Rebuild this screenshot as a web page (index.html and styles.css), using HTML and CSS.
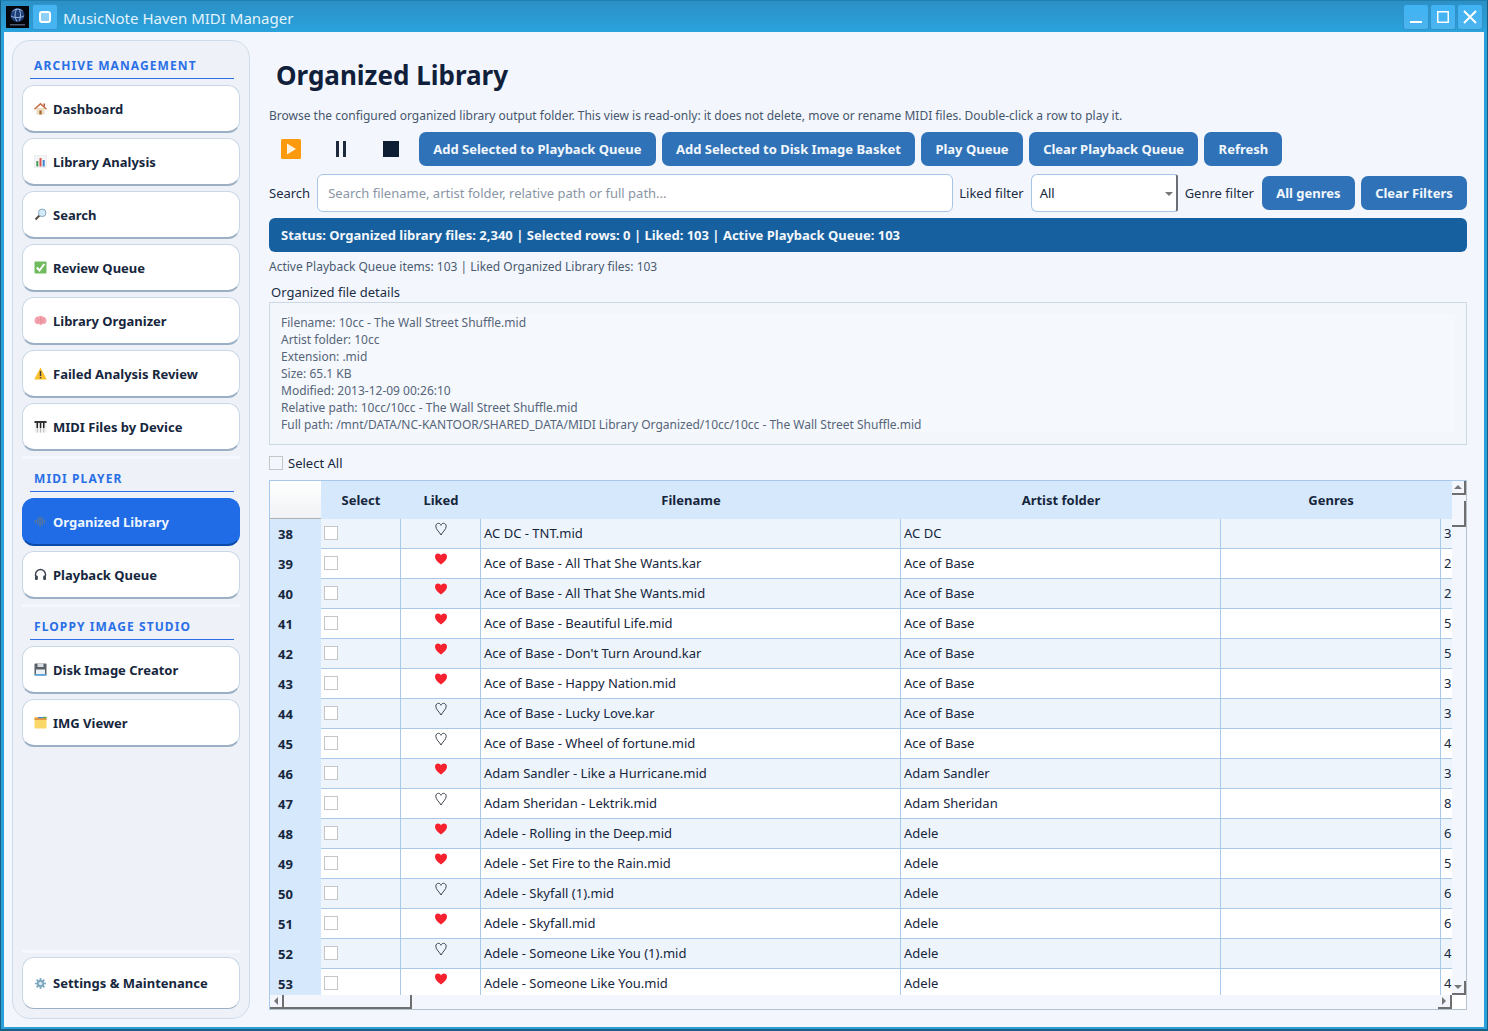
FILE: index.html
```html
<!doctype html>
<html lang="en">
<head>
    <meta charset="UTF-8">
    <title>MusicNote Haven MIDI Manager</title>
    <link rel="stylesheet" href="styles.css">
</head>
<body>
<svg class="defs" width="0" height="0">
    <symbol id="heart" viewBox="0 0 14 14"><path d="M7 12.6C5.6 11.3 1 8.3 1 4.7 1 2.8 2.4 1.6 4 1.6c1.3 0 2.4.7 3 1.9.6-1.2 1.7-1.9 3-1.900 1.600 0 3 1.200 3 3.100 0 3.600-4.600 6.600-6 7.900z"/></symbol>
    <symbol id="heart-line" viewBox="0 0 14 14"><path d="M7 13C5.500 10 1.800 7.500 1.800 4.300 1.800 2.500 3 1.300 4.500 1.300 5.600 1.300 6.500 2 7 3.300 7.500 2 8.400 1.300 9.500 1.300 11 1.300 12.200 2.500 12.200 4.300 12.200 7.500 8.500 10 7 13z"/></symbol>
</svg>
<div id="window">
    <header id="titlebar">
        <svg class="logo" width="23" height="22" viewBox="0 0 23 22">
            <rect width="23" height="22" fill="#05060c"/>
            <circle cx="11.500" cy="9" r="7" fill="#1c3f78"/>
            <path d="M6.500 5.500c3-3 7-3 10-.5M5 10c3 2 9 2 13 0M11 2.500c-2.500 4-2.500 9 0 13M13 3c2 4 2 8 0 12" fill="none" stroke="#a9c6ee" stroke-width=".9"/>
            <rect x="4" y="18" width="15" height="1.500" fill="#4c5a72"/>
        </svg>
        <div class="app-btn"><span class="app-square"></span></div>
        <span class="app-title">MusicNote Haven MIDI Manager</span>
        <div class="win-btns">
            <div class="win-btn"><svg width="14" height="14" viewBox="0 0 14 14"><rect x="1" y="11" width="12" height="2" fill="#fff"/></svg></div>
            <div class="win-btn"><svg width="14" height="14" viewBox="0 0 14 14"><rect x="1.750" y="1.750" width="10.500" height="10.500" fill="none" stroke="#fff" stroke-width="1.500"/></svg></div>
            <div class="win-btn"><svg width="14" height="14" viewBox="0 0 14 14"><path d="M1 1l12 12M13 1L1 13" stroke="#fff" stroke-width="2"/></svg></div>
        </div>
    </header>
    <div id="content">
        <aside id="sidebar">
            <div class="nav-label">ARCHIVE MANAGEMENT</div>
            <a class="nav-item"><svg class="nav-icon" viewBox="0 0 13 13"><rect x="2.500" y="6" width="8" height="6.500" fill="#ecdcc0"/><path d="M6.500 .8L0 6.800l1 .9 5.500-4.900 5.500 4.900 1-.9z" fill="#c8683f"/><rect x="5.300" y="8.500" width="2.400" height="4" fill="#a86a3c"/><rect x="9.500" y="1.500" width="1.500" height="3" fill="#b5583a"/></svg>Dashboard</a>
            <a class="nav-item"><svg class="nav-icon" viewBox="0 0 13 13"><rect x=".5" y=".5" width="12" height="12" fill="#f3f5f7" stroke="#dfe4ea" stroke-width=".5"/><rect x="2.300" y="6" width="2" height="5.500" fill="#4a9a5a"/><rect x="5.500" y="3" width="2" height="8.500" fill="#d9534f"/><rect x="8.700" y="5" width="2" height="6.500" fill="#3f86d9"/></svg>Library Analysis</a>
            <a class="nav-item"><svg class="nav-icon" viewBox="0 0 13 13"><path d="M5.500 7.500L1.500 11.500" stroke="#5b5048" stroke-width="2.200"/><circle cx="8.200" cy="4.800" r="3.800" fill="#d3e9f8" stroke="#8aa7bd" stroke-width="1"/></svg>Search</a>
            <a class="nav-item"><svg class="nav-icon" viewBox="0 0 13 13"><rect x=".5" y=".5" width="12" height="12" rx="1" fill="#6fbb5e"/><path d="M2.800 6.500l2.700 3L10.300 3" fill="none" stroke="#fff" stroke-width="2"/></svg>Review Queue</a>
            <a class="nav-item"><svg class="nav-icon" viewBox="0 0 13 13"><path d="M.5 7c0-3 2-4.800 4-4.300 1-1.200 3.500-1.200 4.500 0 2.200 0 3.800 1.800 3.500 4.300 0 2.300-2 3.300-3.500 2.800-.8 1.400-3 1.400-3.800.2C3 10.500.5 9.500.5 7z" fill="#f3a3ad"/><path d="M3.500 4.500c1 1 1 3 0 4M6.500 3.500c0 2 .5 4 .5 6M9.500 4.500c-1 1.500-1 3 0 4" fill="none" stroke="#de7f8e" stroke-width=".8"/></svg>Library Organizer</a>
            <a class="nav-item"><svg class="nav-icon" viewBox="0 0 13 13"><path d="M6.500 .5L12.800 12.500H.2z" fill="#f9bf2c"/><rect x="5.800" y="4" width="1.400" height="5" fill="#3a3a3a"/><rect x="5.800" y="10" width="1.400" height="1.400" fill="#3a3a3a"/></svg>Failed Analysis Review</a>
            <a class="nav-item"><svg class="nav-icon" viewBox="0 0 13 13"><rect x=".5" y="1" width="12" height="11.500" fill="#f2f2f2"/><rect x=".5" y="1" width="12" height="2" fill="#333"/><path d="M2.500 3h1.500v5H2.500zM5.800 3h1.500v5H5.800zM9 3h1.500v5H9z" fill="#222"/><path d="M3.300 8v4.500M6.500 8v4.500M9.800 8v4.500" stroke="#999" stroke-width=".6"/></svg>MIDI Files by Device</a>
            <div class="nav-sep"></div>
            <div class="nav-label">MIDI PLAYER</div>
            <a class="nav-item active"><svg class="nav-icon" viewBox="0 0 13 13"><path d="M1.500 5v3M3.800 3.500v6M6 1v11M8.200 2.500v8M10.500 4.500v4" stroke="#56779f" stroke-width="1.500"/></svg>Organized Library</a>
            <a class="nav-item"><svg class="nav-icon" viewBox="0 0 13 13"><path d="M1.500 8V6.500a5 5 0 0 1 10 0V8" fill="none" stroke="#3c4450" stroke-width="1.400"/><rect x="1" y="7.500" width="2.800" height="4.500" rx="1" fill="#3c4450"/><rect x="9.200" y="7.500" width="2.800" height="4.500" rx="1" fill="#3c4450"/></svg>Playback Queue</a>
            <div class="nav-sep"></div>
            <div class="nav-label">FLOPPY IMAGE STUDIO</div>
            <a class="nav-item"><svg class="nav-icon" viewBox="0 0 13 13"><rect x=".5" y=".5" width="12" height="12" rx="1" fill="#5a6068"/><rect x="3.500" y=".5" width="6" height="3.500" fill="#d8dde3"/><rect x="2" y="6.500" width="9" height="5" fill="#eef1f4"/><rect x=".5" y="11" width="12" height="1.500" fill="#55a8e6"/></svg>Disk Image Creator</a>
            <a class="nav-item"><svg class="nav-icon" viewBox="0 0 13 13"><rect x=".5" y="1.500" width="12" height="11" rx="1" fill="#f9d768"/><rect x=".5" y="1.500" width="12" height="2.500" fill="#e8973a"/><rect x="8.500" y=".8" width="4" height="1.500" fill="#5aa85a"/><rect x="4" y="1" width="4.500" height="1.200" fill="#3f86d9"/></svg>IMG Viewer</a>
            <div class="nav-spacer"></div>
            <div class="nav-sep bottom"></div>
            <a class="nav-item settings"><svg class="nav-icon" viewBox="0 0 13 13"><path d="M6.500 1v11M1 6.500h11M2.600 2.600l7.800 7.800M10.400 2.600l-7.800 7.800" stroke="#7fa9c0" stroke-width="1.700"/><circle cx="6.500" cy="6.500" r="3.800" fill="#7fa9c0"/><circle cx="6.500" cy="6.500" r="1.700" fill="#dcebf3"/></svg>Settings &amp; Maintenance</a>
        </aside>
        <main id="main">
            <h1 class="page-title">Organized Library</h1>
            <p class="hint">Browse the configured organized library output folder. This view is read-only: it does not delete, move or rename MIDI files. Double-click a row to play it.</p>
            <div class="toolbar">
                <div class="transport">
                    <svg width="20" height="20" viewBox="0 0 20 20"><rect width="20" height="20" rx="1.500" fill="#fb9a0e"/><path d="M6 4.500v11l9-5.500z" fill="#fdf3e2"/></svg>
                </div>
                <div class="transport">
                    <svg width="12" height="16" viewBox="0 0 12 16"><rect x="1" width="3" height="16" fill="#1d2a3c"/><rect x="8" width="3" height="16" fill="#1d2a3c"/></svg>
                </div>
                <div class="transport">
                    <svg width="16" height="16" viewBox="0 0 16 16"><rect width="16" height="16" fill="#0f1f33"/></svg>
                </div>
                <button class="btn">Add Selected to Playback Queue</button>
                <button class="btn">Add Selected to Disk Image Basket</button>
                <button class="btn">Play Queue</button>
                <button class="btn">Clear Playback Queue</button>
                <button class="btn">Refresh</button>
            </div>
            <div class="filters">
                <label>Search</label>
                <div class="search">Search filename, artist folder, relative path or full path...</div>
                <label>Liked filter</label>
                <div class="combo">All<span class="combo-arrow"></span></div>
                <label>Genre filter</label>
                <button class="btn small">All genres</button>
                <button class="btn small">Clear Filters</button>
            </div>
            <div class="status">Status: Organized library files: 2,340 | Selected rows: 0 | Liked: 103 | Active Playback Queue: 103</div>
            <div class="counts">Active Playback Queue items: 103 | Liked Organized Library files: 103</div>
            <div class="details-title">Organized file details</div>
            <div class="details">
                <div class="details-inner">
                    Filename: 10cc - The Wall Street Shuffle.mid<br>
                    Artist folder: 10cc<br>
                    Extension: .mid<br>
                    Size: 65.1 KB<br>
                    Modified: 2013-12-09 00:26:10<br>
                    Relative path: 10cc/10cc - The Wall Street Shuffle.mid<br>
                    Full path: /mnt/DATA/NC-KANTOOR/SHARED_DATA/MIDI Library Organized/10cc/10cc - The Wall Street Shuffle.mid
                </div>
            </div>
            <div class="select-all"><span class="check big"></span>Select All</div>
            <div class="grid-wrap">
                <div class="grid-view">
                    <table class="grid">
                        <colgroup>
                            <col class="c-num"><col class="c-sel"><col class="c-like"><col class="c-file"><col class="c-artist"><col class="c-genre"><col class="c-more">
                        </colgroup>
                        <thead>
                            <tr><th class="corner"></th><th>Select</th><th>Liked</th><th>Filename</th><th>Artist folder</th><th>Genres</th><th></th></tr>
                        </thead>
                        <tbody>
                            <tr><th>38</th><td><span class="check"></span></td><td class="like"><svg class="heart off"><use href="#heart-line"/></svg></td><td>AC DC - TNT.mid</td><td>AC DC</td><td></td><td>3</td></tr>
                            <tr><th>39</th><td><span class="check"></span></td><td class="like"><svg class="heart on"><use href="#heart"/></svg></td><td>Ace of Base - All That She Wants.kar</td><td>Ace of Base</td><td></td><td>2</td></tr>
                            <tr><th>40</th><td><span class="check"></span></td><td class="like"><svg class="heart on"><use href="#heart"/></svg></td><td>Ace of Base - All That She Wants.mid</td><td>Ace of Base</td><td></td><td>2</td></tr>
                            <tr><th>41</th><td><span class="check"></span></td><td class="like"><svg class="heart on"><use href="#heart"/></svg></td><td>Ace of Base - Beautiful Life.mid</td><td>Ace of Base</td><td></td><td>5</td></tr>
                            <tr><th>42</th><td><span class="check"></span></td><td class="like"><svg class="heart on"><use href="#heart"/></svg></td><td>Ace of Base - Don't Turn Around.kar</td><td>Ace of Base</td><td></td><td>5</td></tr>
                            <tr><th>43</th><td><span class="check"></span></td><td class="like"><svg class="heart on"><use href="#heart"/></svg></td><td>Ace of Base - Happy Nation.mid</td><td>Ace of Base</td><td></td><td>3</td></tr>
                            <tr><th>44</th><td><span class="check"></span></td><td class="like"><svg class="heart off"><use href="#heart-line"/></svg></td><td>Ace of Base - Lucky Love.kar</td><td>Ace of Base</td><td></td><td>3</td></tr>
                            <tr><th>45</th><td><span class="check"></span></td><td class="like"><svg class="heart off"><use href="#heart-line"/></svg></td><td>Ace of Base - Wheel of fortune.mid</td><td>Ace of Base</td><td></td><td>4</td></tr>
                            <tr><th>46</th><td><span class="check"></span></td><td class="like"><svg class="heart on"><use href="#heart"/></svg></td><td>Adam Sandler - Like a Hurricane.mid</td><td>Adam Sandler</td><td></td><td>3</td></tr>
                            <tr><th>47</th><td><span class="check"></span></td><td class="like"><svg class="heart off"><use href="#heart-line"/></svg></td><td>Adam Sheridan - Lektrik.mid</td><td>Adam Sheridan</td><td></td><td>8</td></tr>
                            <tr><th>48</th><td><span class="check"></span></td><td class="like"><svg class="heart on"><use href="#heart"/></svg></td><td>Adele - Rolling in the Deep.mid</td><td>Adele</td><td></td><td>6</td></tr>
                            <tr><th>49</th><td><span class="check"></span></td><td class="like"><svg class="heart on"><use href="#heart"/></svg></td><td>Adele - Set Fire to the Rain.mid</td><td>Adele</td><td></td><td>5</td></tr>
                            <tr><th>50</th><td><span class="check"></span></td><td class="like"><svg class="heart off"><use href="#heart-line"/></svg></td><td>Adele - Skyfall (1).mid</td><td>Adele</td><td></td><td>6</td></tr>
                            <tr><th>51</th><td><span class="check"></span></td><td class="like"><svg class="heart on"><use href="#heart"/></svg></td><td>Adele - Skyfall.mid</td><td>Adele</td><td></td><td>6</td></tr>
                            <tr><th>52</th><td><span class="check"></span></td><td class="like"><svg class="heart off"><use href="#heart-line"/></svg></td><td>Adele - Someone Like You (1).mid</td><td>Adele</td><td></td><td>4</td></tr>
                            <tr><th>53</th><td><span class="check"></span></td><td class="like"><svg class="heart on"><use href="#heart"/></svg></td><td>Adele - Someone Like You.mid</td><td>Adele</td><td></td><td>4</td></tr>
                        </tbody>
                    </table>
                </div>
                <div class="vbar">
                    <div class="sb-btn"><span class="arrow up"></span></div>
                    <div class="sb-handle"></div>
                    <div class="sb-fill"></div>
                    <div class="sb-btn"><span class="arrow down"></span></div>
                </div>
                <div class="hbar">
                    <div class="sb-btn"><span class="arrow left"></span></div>
                    <div class="sb-handle wide"></div>
                    <div class="sb-fill"></div>
                    <div class="sb-btn"><span class="arrow right"></span></div>
                </div>
                <div class="sb-corner"></div>
            </div>
        </main>
    </div>
</div>
</body>
</html>
```

FILE: styles.css
```css
* {
    box-sizing: border-box;
}

html, body {
    margin: 0;
    height: 100%;
    overflow: hidden;
}

body {
    font-family: "Noto Sans", sans-serif;
    font-size: 13px;
    color: #16263d;
}

.defs {
    position: absolute;
}

#window {
    height: 1031px;
    display: flex;
    flex-direction: column;
    background: #2a9fd9;
    border: 1px solid #175f85;
    border-bottom-width: 2px;
    border-top-color: #1f7fb0;
}

#titlebar {
    height: 31px;
    flex: none;
    display: flex;
    align-items: center;
    padding: 1px 4px 0 5px;
    background: linear-gradient(#2b90c5, #2aa2dc);
}

.logo {
    flex: none;
}

.app-btn {
    width: 26px;
    height: 26px;
    margin-left: 3px;
    display: flex;
    align-items: center;
    justify-content: center;
    background: #46b4f1;
    border: 1px solid #3295cd;
    border-radius: 3px;
}

.app-square {
    width: 12px;
    height: 12px;
    border: 2px solid #fff;
    border-radius: 3px;
    background: #8fd0f5;
}

.app-title {
    margin-left: 5px;
    padding-top: 2px;
    font-size: 15px;
    color: #e3f3fc;
}

.win-btns {
    margin-left: auto;
    display: flex;
    gap: 1px;
}

.win-btn {
    width: 26px;
    height: 26px;
    display: flex;
    align-items: center;
    justify-content: center;
    background: linear-gradient(#40b3f4, #4bb4ee);
    border: 1px solid #3192ca;
    border-radius: 3px;
}

#content {
    flex: 1;
    min-height: 0;
    display: flex;
    margin: 0 3px 2px 3px;
    padding: 8px 17px 8px 8px;
    background: #f3f7fd;
}

#sidebar {
    width: 238px;
    flex: none;
    display: flex;
    flex-direction: column;
    padding: 16px 9px 9px 9px;
    background: #eef2f8;
    border: 1px solid #cfdbe9;
    border-radius: 18px;
}

.nav-label {
    margin: 0 6px 6px 8px;
    padding: 0 0 3px 4px;
    font-size: 12px;
    line-height: 18px;
    font-weight: 700;
    letter-spacing: 1.100px;
    color: #2a6fe6;
    border-bottom: 1px solid #2a6fe6;
}

.nav-item {
    height: 48px;
    flex: none;
    margin-bottom: 5px;
    display: flex;
    align-items: center;
    gap: 6px;
    padding-left: 11px;
    font-weight: 700;
    color: #16263d;
    background: #fff;
    border: 1px solid #c9d7e7;
    border-bottom: 2px solid #9bafc5;
    border-radius: 12px;
}

.nav-item.active {
    color: #eef5ff;
    background: #1f6ce6;
    border-color: #1f6ce6;
    border-bottom-color: #0c4ba8;
}

.nav-item.settings {
    height: 52px;
    margin-bottom: 0;
    border-bottom-width: 1px;
}

.nav-icon {
    width: 13px;
    height: 13px;
    flex: none;
}

.nav-sep {
    height: 3px;
    flex: none;
    margin: 0 0 11px 0;
    background: #f4f7fb;
}

.nav-sep.bottom {
    margin: 0 0 4px 0;
}

.nav-spacer {
    flex: 1;
}

#main {
    flex: 1;
    min-width: 0;
    display: flex;
    flex-direction: column;
    padding-left: 19px;
}

.page-title {
    margin: 0 0 0 7px;
    height: 67px;
    padding-top: 15px;
    font-size: 26px;
    line-height: 40px;
    font-weight: 700;
    color: #10203a;
}

.hint {
    margin: 0;
    font-size: 12px;
    line-height: 18px;
    color: #46566c;
}

.toolbar {
    margin-top: 7px;
    height: 34px;
    flex: none;
    display: flex;
    align-items: center;
    gap: 6px;
}

.transport {
    width: 44px;
    display: flex;
    align-items: center;
    justify-content: center;
}

.btn {
    height: 34px;
    padding: 0 14.250px;
    font-family: inherit;
    font-size: 13px;
    font-weight: 700;
    color: #f2f7fc;
    background: #2f72b8;
    border: none;
    border-radius: 7px;
}

.filters {
    margin-top: 8px;
    height: 38px;
    flex: none;
    display: flex;
    align-items: center;
    gap: 6px;
}

.filters label {
    color: #1c2c44;
}

.search {
    flex: 1;
    height: 38px;
    margin-left: 1px;
    padding-left: 10px;
    display: flex;
    align-items: center;
    color: #8a95a5;
    background: #fff;
    border: 1px solid #a9c5e6;
    border-radius: 6px;
}

.combo {
    position: relative;
    width: 147px;
    height: 38px;
    margin: 0 1px;
    padding-left: 8px;
    display: flex;
    align-items: center;
    background: #fff;
    border: 1px solid #a9c5e6;
    border-right: 2px solid #6a6f75;
    border-radius: 6px 3px 3px 6px;
}

.combo-arrow {
    position: absolute;
    right: 3px;
    top: 17px;
    border-left: 4px solid transparent;
    border-right: 4px solid transparent;
    border-top: 4px solid #777;
}

.btn.small {
    min-width: 93px;
    margin-left: 2px;
    margin-right: -2px;
}

.btn.small + .btn.small {
    margin-left: 2px;
    margin-right: 0;
}

.status {
    margin-top: 6px;
    height: 34px;
    flex: none;
    padding-left: 12px;
    display: flex;
    align-items: center;
    font-weight: 700;
    color: #f2f7fc;
    background: #17609f;
    border-radius: 6px;
}

.counts {
    margin-top: 6px;
    font-size: 12px;
    line-height: 18px;
    color: #4a5a70;
}

.details-title {
    margin: 7px 0 0 2px;
    line-height: 18px;
    color: #1c2c44;
}

.details {
    margin-top: 1px;
    height: 143px;
    flex: none;
    padding: 11px 11px 10px;
    background: #f3f6fb;
    border: 1px solid #cdd8e5;
}

.details-inner {
    font-size: 12px;
    line-height: 17px;
    color: #56657a;
    background: #f5f8fc;
}

.select-all {
    margin-top: 9px;
    height: 18px;
    display: flex;
    align-items: center;
    gap: 5px;
}

.check {
    display: block;
    width: 14px;
    height: 14px;
    background: #fff;
    border: 1px solid #c6c6c6;
}

.check.big {
    background: #f3f7fd;
}

.grid-wrap {
    margin-top: 8px;
    height: 530px;
    flex: none;
    display: grid;
    grid-template-columns: 1fr 14px;
    grid-template-rows: 1fr 14px;
    border: 1px solid #a8c8ea;
    border-bottom-color: #b4c2d0;
    border-right-color: #b4c2d0;
}

.grid-view {
    overflow: hidden;
    min-width: 0;
    min-height: 0;
}

.grid {
    width: 1182px;
    table-layout: fixed;
    border-collapse: separate;
    border-spacing: 0;
}

.c-num { width: 51px; }
.c-sel { width: 80px; }
.c-like { width: 80px; }
.c-file { width: 420px; }
.c-artist { width: 320px; }
.c-genre { width: 220px; }
.c-more { width: 11px; }

.grid thead th {
    height: 38px;
    padding: 0;
    font-weight: 700;
    text-align: center;
    color: #16263d;
    background: #d6e8fb;
}

.grid thead th.corner {
    background: linear-gradient(#fff, #f0f2f5);
    border-bottom: 1px solid #b0b0b0;
}

.grid tbody th {
    height: 30px;
    padding: 0 0 0 8px;
    font-weight: 700;
    text-align: left;
    background: #d6e8fb;
}

.grid td {
    height: 30px;
    padding: 0 0 1px 3px;
    overflow: hidden;
    white-space: nowrap;
    border-right: 1px solid #a9c9ea;
    border-bottom: 1px solid #a9c9ea;
}

.grid td:last-child {
    border-right: none;
}

.grid tbody tr:nth-child(odd) td {
    background: #edf4fc;
}

.grid tbody tr:nth-child(even) td {
    background: #fff;
}

.grid td.like {
    padding: 0 0 9px 0;
    text-align: center;
    line-height: 0;
}

.heart {
    width: 14px;
    height: 14px;
}

.heart.on {
    fill: #f8222e;
}

.heart.off {
    fill: none;
    stroke: #3c424c;
    stroke-width: 1;
}

.vbar,
.hbar {
    display: flex;
    background: #f3f7fd;
}

.vbar {
    flex-direction: column;
}

.sb-btn {
    width: 14px;
    height: 14px;
    flex: none;
    display: flex;
    align-items: center;
    justify-content: center;
    background: #f3f7fd;
    border-right: 2px solid #6f6f6f;
    border-bottom: 2px solid #6f6f6f;
}

.sb-handle {
    height: 26px;
    margin-top: 6px;
    background: #f3f7fd;
    border-right: 2px solid #6f6f6f;
    border-bottom: 2px solid #6f6f6f;
}

.sb-handle.wide {
    width: 128px;
    height: 14px;
    margin-top: 0;
}

.sb-fill {
    flex: 1;
}

.sb-corner {
    background: #fff;
}

.arrow {
    width: 0;
    height: 0;
    border: 4px solid transparent;
}

.arrow.up {
    border-top: none;
    border-bottom-color: #777;
}

.arrow.down {
    border-bottom: none;
    border-top-color: #777;
}

.arrow.left {
    border-left: none;
    border-right-color: #777;
}

.arrow.right {
    border-right: none;
    border-left-color: #777;
}
```
